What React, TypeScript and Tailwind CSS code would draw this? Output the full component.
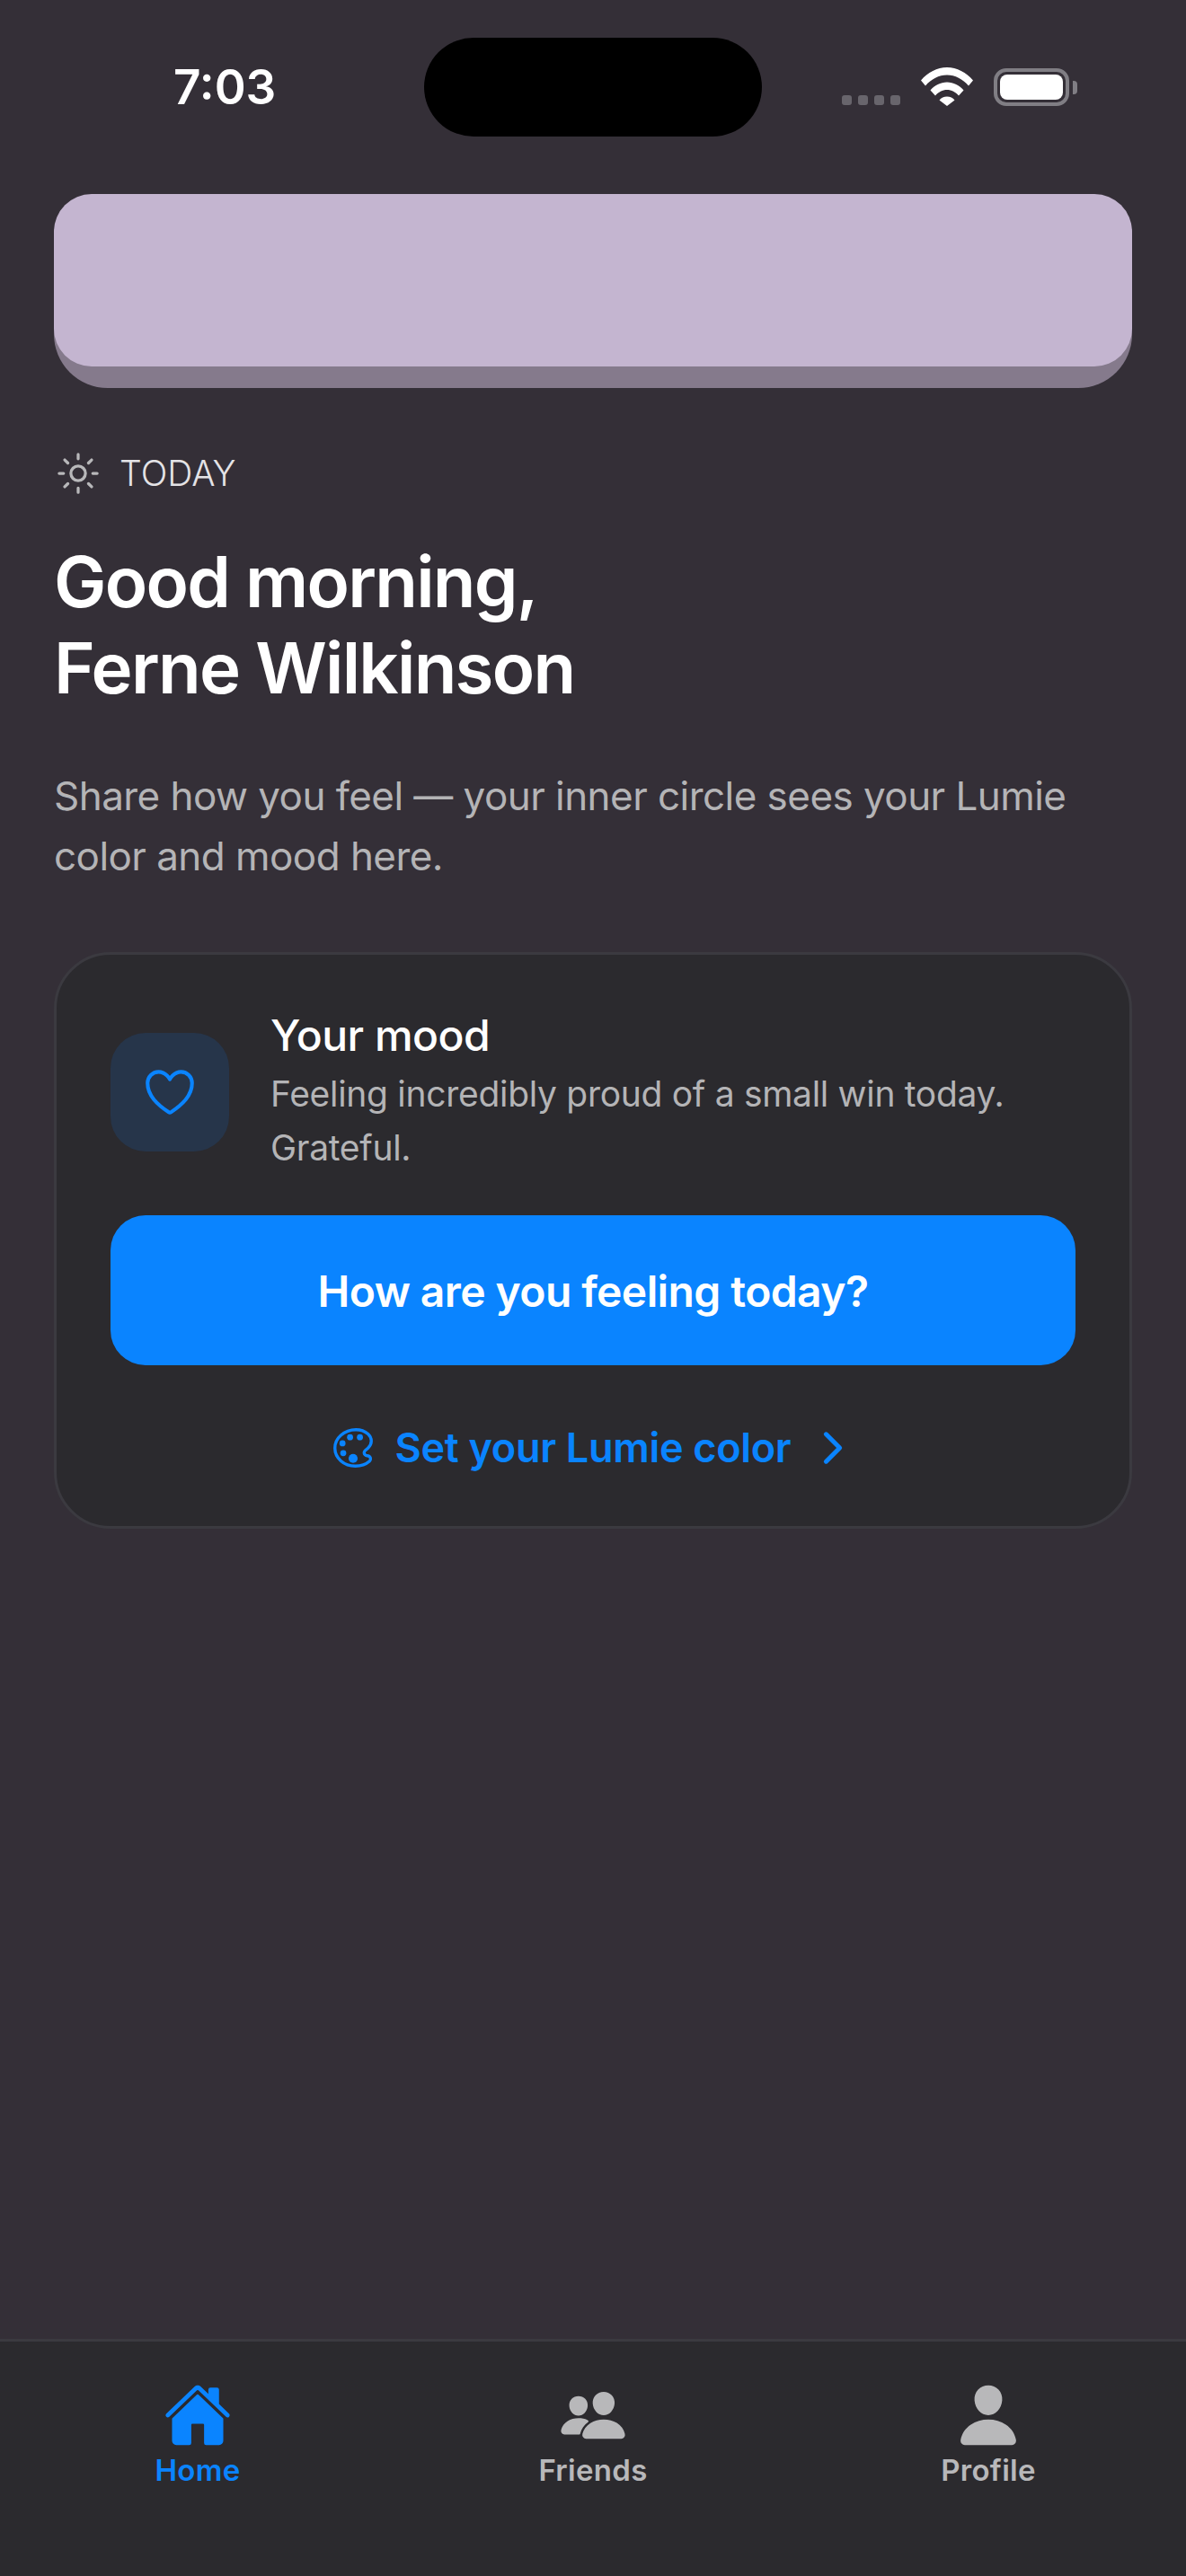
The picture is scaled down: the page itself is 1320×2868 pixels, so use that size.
import React from "react";
import {
  IoSunnyOutline,
  IoHeartOutline,
  IoColorPaletteOutline,
  IoChevronForward,
  IoHome,
  IoPeople,
  IoPerson,
} from "react-icons/io5";

function StatusBar() {
  return (
    <div className="flex h-[110px] items-center mt-[42px]">
      <div className="w-[472px] pl-[193px] text-[53px] leading-[60px] font-semibold text-white">7:03</div>
      <div className="w-[376px] h-[110px] rounded-full bg-black" />
      <div className="flex items-end pl-[89px] h-[42px]">
        <div className="flex gap-[7px] mb-[1px]">
          <div className="w-[11px] h-[11px] rounded-[3px] bg-[#68656c]" />
          <div className="w-[11px] h-[11px] rounded-[3px] bg-[#68656c]" />
          <div className="w-[11px] h-[11px] rounded-[3px] bg-[#68656c]" />
          <div className="w-[11px] h-[11px] rounded-[3px] bg-[#68656c]" />
        </div>
        <svg width="58" height="43" viewBox="0 0 58 43" className="ml-[23px]" fill="#fff">
          <path d="M0 14.5C7.5 5.5 18 0 29 0s21.500 5.500 29 14.500l-5 6C46.500 13 38 8.500 29 8.500S11.500 13 5 20.500z" />
          <path d="M10.500 25.500C15 20 22 16.500 29 16.500s14 3.500 18.500 9l-5.500 6C38.500 27.500 34 25 29 25s-9.500 2.500-13 6.500z" />
          <path d="M20.500 36.500C22.500 34 25.500 32.500 29 32.500s6.500 1.500 8.500 4L29 43z" />
        </svg>
        <div className="flex items-center ml-[23px]">
          <div className="w-[84px] h-[42px] rounded-[14px] border-[4px] border-[#807e84] p-[3px]">
            <div className="w-full h-full rounded-[8px] bg-white" />
          </div>
          <div className="ml-[4px] w-[5px] h-[15px] rounded-r-[4px] bg-[#807e84]" />
        </div>
      </div>
    </div>
  );
}

function Tab({ icon, label, active }: { icon: React.ReactNode; label: string; active?: boolean }) {
  return (
    <div className={"flex-1 flex flex-col items-center " + (active ? "text-[#0a84ff]" : "text-[#b8b8ba]")}>
      <div className="h-[78px] flex items-center justify-center">{icon}</div>
      <div className="mt-[2px] text-[33px] leading-[40px] font-semibold tracking-[0.3px]">{label}</div>
    </div>
  );
}

export default function App() {
  return (
    <div
      className="w-[1320px] h-[2868px] flex flex-col bg-[#342f37] overflow-hidden"
      style={{ fontFamily: "Inter, 'Liberation Sans', sans-serif" }}
    >
      <StatusBar />
      <div className="flex-1 px-[60px] mt-[64px]">
        <div className="h-[216px] rounded-[60px] bg-[#857a8c]">
          <div className="h-[192px] rounded-[42px] bg-[#c4b5d0]" />
        </div>

        <div className="flex items-center mt-[71px] h-[48px] text-[#e4e3e6]">
          <IoSunnyOutline className="ml-[1px] text-[#b8b8ba]" size={52} />
          <span className="ml-[20px] text-[39px] leading-[48px] font-light">TODAY</span>
        </div>

        <h1 className="mt-[49px] text-[78px] leading-[96px] font-semibold text-white tracking-[-1.75px]">
          Good morning,
          <br />
          Ferne Wilkinson
        </h1>

        <p className="mt-[61px] text-[44px] leading-[67px] font-normal text-[#b4b4b6] tracking-[-0.55px]">
          Share how you feel — your inner circle sees your Lumie
          <br />
          color and mood here.
        </p>

        <div className="mt-[73px] h-[642px] rounded-[63px] border-[3px] border-[#3b3a40] bg-[#2b2a2e] px-[60px] pt-[57px]">
          <div className="flex items-center">
            <div className="mt-[3px] w-[132px] h-[132px] rounded-[39px] bg-[#26354a] flex items-center justify-center shrink-0 text-[#0a84ff]">
              <IoHeartOutline size={66} />
            </div>
            <div className="ml-[46px]">
              <div className="text-[48px] leading-[66px] font-medium text-white tracking-[-0.5px]">Your mood</div>
              <div className="mt-[2px] text-[39px] leading-[60px] font-normal text-[#b4b4b6] tracking-[-0.3px]">
                Feeling incredibly proud of a small win today.
                <br />
                Grateful.
              </div>
            </div>
          </div>

          <div className="mt-[45px] h-[167px] pt-[3px] rounded-[39px] bg-[#0a84ff] flex items-center justify-center text-[48px] font-semibold text-white tracking-[-0.6px]">
            How are you feeling today?
          </div>

          <div className="mt-[62px] h-[60px] flex items-center justify-center text-[#0a84ff]">
            <IoColorPaletteOutline size={54} />
            <span className="ml-[20px] text-[45px] leading-[60px] font-semibold tracking-[-0.3px]">Set your Lumie color</span>
            <IoChevronForward size={54} className="ml-[20px]" />
          </div>
        </div>
      </div>

      <div className="h-[264px] border-t-[3px] border-[#3b3a40] bg-[#2b2a2e] flex pt-[43px]">
        <Tab active label="Home" icon={<IoHome size={76} />} />
        <Tab label="Friends" icon={<IoPeople size={76} />} />
        <Tab label="Profile" icon={<IoPerson size={76} />} />
      </div>
    </div>
  );
}
